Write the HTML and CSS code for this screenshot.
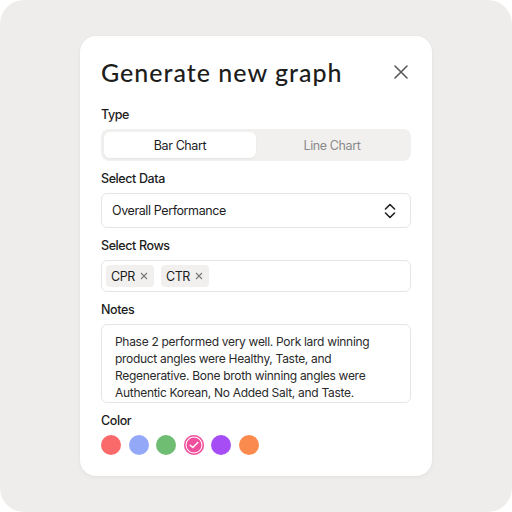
FILE: index.html
```html
<!DOCTYPE html>
<html>
<head>
<meta charset="utf-8">
<link rel="stylesheet" href="styles.css">
</head>
<body>
<div class="backdrop">
  <div class="card">
    <div class="header">
      <h1 class="title">Generate new graph</h1>
      <button class="close" aria-label="Close">
        <svg width="14" height="14" viewBox="0 0 14 14"><path d="M1 1L13 13M13 1L1 13" stroke="#5a5a5a" stroke-width="1.6" stroke-linecap="round"/></svg>
      </button>
    </div>

    <div class="field first">
      <div class="label">Type</div>
      <div class="segmented">
        <div class="seg active">Bar Chart</div>
        <div class="seg">Line Chart</div>
      </div>
    </div>

    <div class="field">
      <div class="label">Select Data</div>
      <div class="select">
        <span>Overall Performance</span>
        <svg width="12" height="16" viewBox="0 0 12 16"><path d="M1.5 6L6 1.5L10.5 6M1.5 10L6 14.5L10.5 10" fill="none" stroke="#222" stroke-width="1.6" stroke-linecap="round" stroke-linejoin="round"/></svg>
      </div>
    </div>

    <div class="field">
      <div class="label">Select Rows</div>
      <div class="rows">
        <span class="chip">CPR <svg width="8" height="8" viewBox="0 0 8 8"><path d="M1 1L7 7M7 1L1 7" stroke="#777" stroke-width="1.1"/></svg></span>
        <span class="chip">CTR <svg width="8" height="8" viewBox="0 0 8 8"><path d="M1 1L7 7M7 1L1 7" stroke="#777" stroke-width="1.1"/></svg></span>
      </div>
    </div>

    <div class="field">
      <div class="label">Notes</div>
      <div class="notes">Phase 2 performed very well. Pork lard winning<br>product angles were Healthy, Taste, and<br>Regenerative. Bone broth winning angles were<br>Authentic Korean, No Added Salt, and Taste.</div>
    </div>

    <div class="field">
      <div class="label">Color</div>
      <div class="colors">
        <span class="dot red"></span>
        <span class="dot blue"></span>
        <span class="dot green"></span>
        <span class="dot pink selected">
          <svg width="10" height="8" viewBox="0 0 10 8"><path d="M1.2 4.2L3.8 6.6L8.8 1.4" fill="none" stroke="#fff" stroke-width="1.4" stroke-linecap="round" stroke-linejoin="round"/></svg>
        </span>
        <span class="dot purple"></span>
        <span class="dot orange"></span>
      </div>
    </div>
  </div>
</div>
</body>
</html>
```

FILE: styles.css
```css
* { box-sizing: border-box; }
html, body { margin: 0; padding: 0; background: #ffffff; }
body { font-family: Inter, "Noto Sans", sans-serif; color: #1c1c1c; letter-spacing: -0.4px; }

.backdrop {
  width: 512px;
  height: 512px;
  background: #eeedeb;
  border-radius: 24px;
  display: flex;
  align-items: center;
  justify-content: center;
}

.card {
  width: 352px;
  height: 440px;
  background: #ffffff;
  border-radius: 16px;
  box-shadow: 0 1px 4px rgba(0,0,0,0.06);
  padding: 22px 21px 0 21px;
  display: flex;
  flex-direction: column;
}

.header {
  height: 28px;
  display: flex;
  align-items: center;
  justify-content: space-between;
}

.title {
  margin: 0;
  font-family: Lato, "DejaVu Sans", sans-serif;
  font-weight: 500;
  font-size: 25px;
  letter-spacing: 1px;
  color: #1d1d1d;
}

.close {
  border: 0;
  background: none;
  padding: 0;
  width: 14px;
  height: 14px;
  margin-right: 3px;
  display: flex;
}

.field { display: flex; flex-direction: column; gap: 6px; margin-top: 10px; }
.field.first { margin-top: 21px; }

.label {
  font-size: 12.5px;
  line-height: 16px;
  font-weight: 500;
  color: #1c1c1c;
}

.segmented {
  height: 32px;
  background: #f1f0ee;
  border-radius: 8px;
  padding: 3px;
  display: flex;
}
.seg {
  flex: 1;
  display: flex;
  align-items: center;
  justify-content: center;
  font-size: 12.5px;
  color: #8a8a8a;
  border-radius: 6px;
}
.seg.active {
  background: #ffffff;
  color: #1c1c1c;
  box-shadow: 0 1px 2px rgba(0,0,0,0.05);
}

.select {
  height: 35px;
  border: 1px solid #e6e5e3;
  border-radius: 6px;
  display: flex;
  align-items: center;
  justify-content: space-between;
  padding: 0 14px 0 10px;
  font-size: 12.5px;
}

.rows {
  height: 32px;
  border: 1px solid #e6e5e3;
  border-radius: 6px;
  display: flex;
  align-items: center;
  gap: 7px;
  padding: 0 4px;
}
.chip {
  height: 22px;
  background: #f1f0ee;
  border-radius: 4px;
  padding: 0 6px 0 5px;
  display: flex;
  align-items: center;
  gap: 5px;
  font-size: 12.5px;
}

.notes {
  height: 79px;
  border: 1px solid #e6e5e3;
  border-radius: 6px;
  padding: 8px 10px 0 13px;
  font-size: 12px;
  letter-spacing: -0.3px;
  line-height: 17px;
  color: #2a2a2a;
  white-space: nowrap;
}

.colors { display: flex; gap: 7.6px; }
.dot {
  width: 20px;
  height: 20px;
  border-radius: 50%;
  display: flex;
  align-items: center;
  justify-content: center;
}
.red { background: #fb6a6a; }
.blue { background: #94a8f8; }
.green { background: #6fbd72; }
.pink { background: #ef4f9c; }
.pink.selected { box-shadow: inset 0 0 0 1.5px #ef4f9c, inset 0 0 0 2.5px #ffffff; }
.purple { background: #a64df6; }
.orange { background: #fb8a4e; }
```
